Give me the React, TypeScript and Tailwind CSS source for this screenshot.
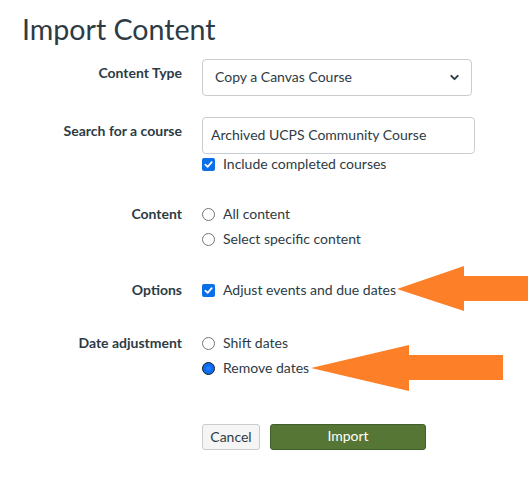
import { ChevronDown } from 'lucide-react';

const Radio = ({ checked }: { checked?: boolean }) =>
  checked ? (
    <span className="flex h-[13px] w-[13px] shrink-0 items-center justify-center rounded-full border border-[#1c1c1c] bg-[#0a6cf0]">
      <span className="h-[5px] w-[5px] rounded-full bg-[#1f7bff]" />
    </span>
  ) : (
    <span className="h-[13px] w-[13px] shrink-0 rounded-full border border-[#767676] bg-white" />
  );

const Checkbox = () => (
  <span className="flex h-[13px] w-[13px] shrink-0 items-center justify-center rounded-[2px] bg-[#0b6fe8]">
    <svg width="9" height="9" viewBox="0 0 10 10" fill="none">
      <path d="M1.5 5.2 L4 7.6 L8.6 2.4" stroke="white" strokeWidth="1.9" strokeLinecap="round" strokeLinejoin="round" />
    </svg>
  </span>
);

const Option = ({ children, control }: { children: React.ReactNode; control: React.ReactNode }) => (
  <label className="flex h-[25px] items-center gap-[8px]">
    {control}
    <span className="pb-[2px]">{children}</span>
  </label>
);

const App = () => {
  return (
    <div className="relative h-[501px] w-[528px] overflow-hidden bg-white font-['Lato','Liberation_Sans',sans-serif] text-[14px] text-[#2d3b45]">
      <h1 className="mt-[11px] pl-[22px] text-[28.6px] leading-[36px] font-normal">Import Content</h1>

      <div className="mt-[12px] grid grid-cols-[182px_1fr] gap-x-[20px]">
        <div className="pt-[4px] text-right leading-5 font-bold">Content Type</div>
        <div className="flex h-[37px] w-[270px] items-center justify-between rounded-[4px] border border-[#c7cdd1] pr-[10px] pb-[2px] pl-[12px] text-[#2d3b45]">
          <span>Copy a Canvas Course</span>
          <ChevronDown size={13} strokeWidth={3.5} className="mt-[2px] text-[#2d3b45]" />
        </div>

        <div className="mt-[21px] pt-[4px] text-right leading-5 font-bold">Search for a course</div>
        <div className="mt-[21px]">
          <div className="flex h-[37px] w-[273px] items-center rounded-[4px] border border-[#c7cdd1] pb-[2px] pl-[8px]">
            Archived UCPS Community Course
          </div>
          <label className="flex h-[20px] items-center gap-[8px]">
            <Checkbox />
            <span className="pb-[2px]">Include completed courses</span>
          </label>
        </div>

        <div className="mt-[28px] flex h-[25px] items-center justify-end pb-[2px] font-bold">Content</div>
        <div className="mt-[28px]">
          <Option control={<Radio />}>All content</Option>
          <Option control={<Radio />}>Select specific content</Option>
        </div>

        <div className="mt-[26px] flex h-[25px] items-center justify-end pb-[2px] font-bold">Options</div>
        <div className="mt-[26px]">
          <Option control={<Checkbox />}>Adjust events and due dates</Option>
        </div>

        <div className="mt-[28px] flex h-[25px] items-center justify-end pb-[2px] font-bold">Date adjustment</div>
        <div className="mt-[28px]">
          <Option control={<Radio />}>Shift dates</Option>
          <Option control={<Radio checked />}>Remove dates</Option>
        </div>

        <div />
        <div className="mt-[43px] flex gap-[10px]">
          <button className="h-[26px] w-[58px] rounded-[3px] border border-[#c7cdd1] bg-[#f5f5f5] pb-[2px] text-[#2d3b45]">
            Cancel
          </button>
          <button className="h-[26px] w-[156px] rounded-[3px] border border-[#40602a] bg-[#557634] pb-[3px] text-white">
            Import
          </button>
        </div>
      </div>

      <svg className="pointer-events-none absolute top-0 left-0" width="528" height="501" viewBox="0 0 528 501">
        <polygon points="397,289 464,266 464,276 528,276 528,301 464,301 464,311" fill="#fd7f28" />
        <polygon points="311,368 409,345 409,355 503,355 503,380 409,380 409,391" fill="#fd7f28" />
      </svg>
    </div>
  );
};

export default App;
